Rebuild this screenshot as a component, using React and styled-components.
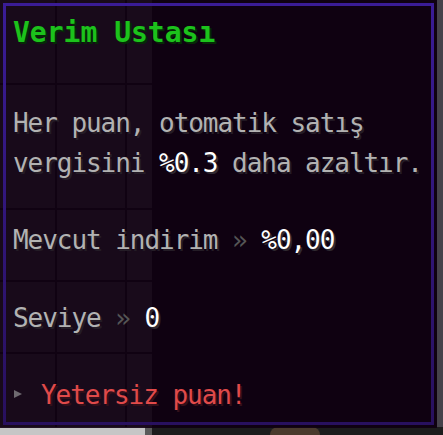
import React from 'react'
import styled, { createGlobalStyle } from 'styled-components'

const Global = createGlobalStyle`
  html, body {
    margin: 0;
    padding: 0;
    background: #0a0a0a;
  }
  #root {
    width: 443px;
    height: 435px;
    overflow: hidden;
  }
`

const Screen = styled.div`
  position: relative;
  width: 443px;
  height: 435px;
  display: flex;
  flex-direction: column;
  background: #0a0a0a;
  font-family: "DejaVu Sans Mono", "Liberation Mono", monospace;
`

const World = styled.div`
  height: 427px;
  display: flex;
`

const SlotPanel = styled.div`
  width: 152px;
  display: grid;
  grid-template-columns: 55px 68px 27px;
  grid-template-rows: 83px 123px 70px 70px 73px;
  gap: 2px;
  background: #1a1a1a;
`

const Slot = styled.div`
  background: ${p => (p.$edge ? '#767076' : '#6c6c6c')};
`

const DarkArea = styled.div`
  flex: 1;
  background: #0a0a0a;
`

const SideStrip = styled.div`
  width: 6px;
  background: #45424a;
`

const Ground = styled.div`
  height: 8px;
  display: flex;
`

const GroundPiece = styled.div`
  width: ${p => p.$w || 'auto'};
  flex: ${p => (p.$w ? 'none' : 1)};
  background: ${p => p.$bg};
  display: flex;
  justify-content: flex-start;
`

const Blob = styled.div`
  margin-left: 118px;
  width: 50px;
  height: 8px;
  border-radius: 24px 24px 0 0;
  background: #4a3a2c;
`

const Tooltip = styled.div`
  position: absolute;
  left: 0;
  top: 0;
  width: 437px;
  height: 428px;
  box-sizing: border-box;
  padding: 3px;
  background: rgba(16, 0, 18, 0.9);
  display: flex;
`

const Frame = styled.div`
  flex: 1;
  box-sizing: border-box;
  border: 3px solid;
  border-image: linear-gradient(#3a1c96, #28105e) 1;
  padding: 7px;
  display: flex;
  flex-direction: column;
`

const Title = styled.div`
  font-size: 28px;
  font-weight: bold;
  line-height: 40px;
  color: #1cc21c;
  text-shadow: 2px 2px 0 #062a06;
  margin-bottom: 50px;
  white-space: pre;
`

const Line = styled.div`
  font-size: 26px;
  line-height: 40px;
  height: 40px;
  letter-spacing: -1.05px;
  color: #b2b2b2;
  text-shadow: 2px 2px 0 #241c26;
  white-space: pre;
`

const Value = styled.span`
  color: #ffffff;
  text-shadow: 2px 2px 0 #302a32;
`

const Sep = styled.span`
  color: #555555;
  text-shadow: none;
`

const Warn = styled.span`
  color: #e04a4a;
  text-shadow: 2px 2px 0 #33101a;
`

const Arrow = styled.span`
  display: inline-block;
  vertical-align: middle;
  width: 0;
  height: 0;
  border-top: 4px solid transparent;
  border-bottom: 4px solid transparent;
  border-left: 8px solid #6e6a70;
  margin: 0 19px 4px 1px;
`

const slots = [0, 1, 2, 3, 4, 5, 6, 7, 8, 9, 10, 11, 12, 13, 14]

export default function App() {
  return (
    <>
      <Global />
      <Screen>
        <World>
          <SlotPanel>
            {slots.map(i => (
              <Slot key={i} $edge={i % 3 === 2} />
            ))}
          </SlotPanel>
          <DarkArea />
          <SideStrip />
        </World>
        <Ground>
          <GroundPiece $w="145px" $bg="#c6c6c6" />
          <GroundPiece $w="7px" $bg="#5a5a5a" />
          <GroundPiece $bg="#1c1c1c">
            <Blob />
          </GroundPiece>
        </Ground>

        <Tooltip>
          <Frame>
            <Title>Verim Ustası</Title>
            <Line>Her puan, otomatik satış</Line>
            <Line>
              vergisini <Value>%0.3</Value> daha azaltır.
            </Line>
            <Line />
            <Line>
              Mevcut indirim <Sep>»</Sep> <Value>%0,00</Value>
            </Line>
            <Line />
            <Line>
              Seviye <Sep>»</Sep> <Value>0</Value>
            </Line>
            <Line />
            <Line>
              <Arrow />
              <Warn>Yetersiz puan!</Warn>
            </Line>
          </Frame>
        </Tooltip>
      </Screen>
    </>
  )
}
